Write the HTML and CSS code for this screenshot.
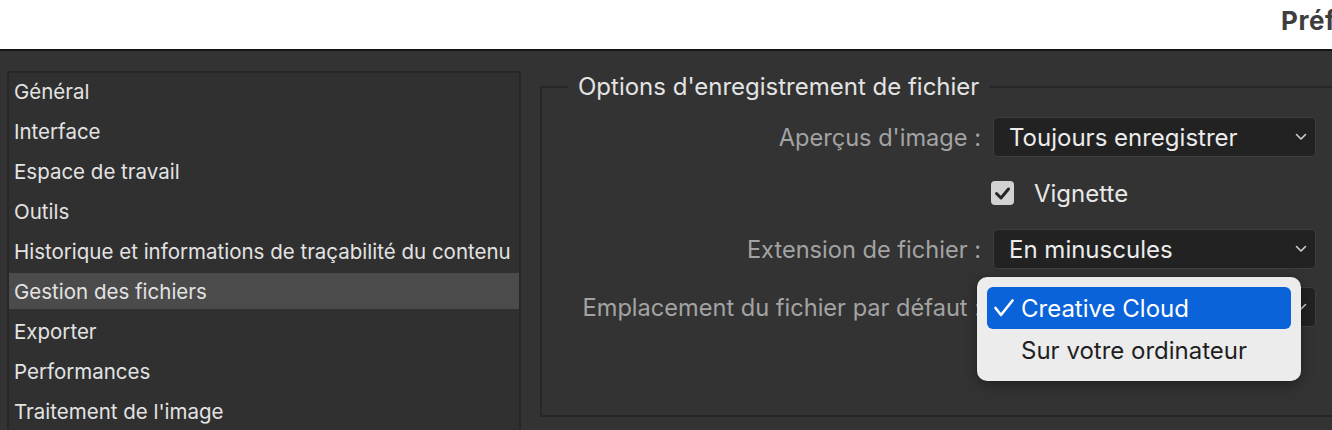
FILE: index.html
```html
<!DOCTYPE html>
<html lang="fr">
<head>
<meta charset="utf-8">
<title>Préférences</title>
<link rel="stylesheet" href="styles.css">
</head>
<body>
<div class="window">
  <header class="titlebar"><span class="title">Préférences</span></header>
  <main class="content">
    <nav class="sidebar">
      <div class="item">Général</div>
      <div class="item">Interface</div>
      <div class="item">Espace de travail</div>
      <div class="item">Outils</div>
      <div class="item">Historique et informations de traçabilité du contenu</div>
      <div class="item selected">Gestion des fichiers</div>
      <div class="item">Exporter</div>
      <div class="item">Performances</div>
      <div class="item">Traitement de l'image</div>
    </nav>
    <fieldset class="group">
      <legend class="legend">Options d'enregistrement de fichier</legend>
      <div class="form">
        <label class="lbl">Aperçus d'image :</label>
        <div class="select">
          <span>Toujours enregistrer</span>
          <svg class="chev" width="12" height="8" viewBox="0 0 12 8"><polyline points="1.5,1.5 6,6 10.5,1.5" fill="none" stroke="#cfcfcf" stroke-width="1.6" stroke-linecap="round" stroke-linejoin="round"/></svg>
        </div>

        <span class="lbl"></span>
        <div class="checkrow">
          <span class="checkbox">
            <svg width="23" height="24" viewBox="0 0 23 24"><polyline points="5.5,12.5 10,17 17.5,8" fill="none" stroke="#262626" stroke-width="3" stroke-linecap="round" stroke-linejoin="round"/></svg>
          </span>
          <span class="checklabel">Vignette</span>
        </div>

        <label class="lbl">Extension de fichier :</label>
        <div class="select">
          <span>En minuscules</span>
          <svg class="chev" width="12" height="8" viewBox="0 0 12 8"><polyline points="1.5,1.5 6,6 10.5,1.5" fill="none" stroke="#cfcfcf" stroke-width="1.6" stroke-linecap="round" stroke-linejoin="round"/></svg>
        </div>

        <label class="lbl last">Emplacement du fichier par défaut :</label>
        <div class="select open last">
          <span>Creative Cloud</span>
          <svg class="chev" width="12" height="8" viewBox="0 0 12 8"><polyline points="1.5,1.5 6,6 10.5,1.5" fill="none" stroke="#cfcfcf" stroke-width="1.6" stroke-linecap="round" stroke-linejoin="round"/></svg>
          <div class="menu">
            <div class="menu-item active">
              <svg class="tick" width="20" height="18" viewBox="0 0 20 18"><polyline points="1.5,9 7,16 18.5,1.5" fill="none" stroke="#ffffff" stroke-width="2.6" stroke-linecap="round" stroke-linejoin="round"/></svg>
              <span>Creative Cloud</span>
            </div>
            <div class="menu-item"><span>Sur votre ordinateur</span></div>
          </div>
        </div>
      </div>
    </fieldset>
  </main>
</div>
</body>
</html>
```

FILE: styles.css
```css
html, body {
  margin: 0;
  padding: 0;
  height: 430px;
  overflow: hidden;
  background: #333333;
  font-family: Inter, "Noto Sans", "Liberation Sans", sans-serif;
}

.window {
  width: 1332px;
  height: 430px;
  overflow: hidden;
}

.titlebar {
  box-sizing: border-box;
  width: 1332px;
  height: 51px;
  background: #ffffff;
  border-bottom: 2px solid #151515;
  display: flex;
  align-items: flex-start;
  padding: 5px 0 0 1281px;
  overflow: hidden;
  white-space: nowrap;
}

.title {
  font-weight: 700;
  font-size: 26px;
  line-height: 32px;
  letter-spacing: 0.6px;
  color: #3e3e3e;
}

.content {
  display: flex;
  align-items: flex-start;
  padding: 20px 0 0 7px;
}

.sidebar {
  box-sizing: border-box;
  flex-shrink: 0;
  width: 514px;
  height: 420px;
  border: 2px solid #272727;
  background: #303030;
  display: flex;
  flex-direction: column;
  gap: 4px;
}

.item {
  height: 36px;
  display: flex;
  align-items: center;
  padding-left: 5px;
  font-size: 20.5px;
  color: #e3e3e3;
  white-space: nowrap;
}

.item.selected {
  background: #4b4b4b;
}

.group {
  flex-shrink: 0;
  margin: 2px 0 0 19px;
  padding: 0 24px 88px 0;
  border: 2px solid #272727;
  min-width: 0;
}

.legend {
  margin-left: 26px;
  padding: 0 10px;
  font-size: 24px;
  line-height: 28px;
  color: #e3e3e3;
}

.form {
  display: grid;
  grid-template-columns: 439px 323px;
  column-gap: 12px;
  row-gap: 16px;
  align-items: center;
  padding-top: 16px;
}

.lbl {
  text-align: right;
  font-size: 23.6px;
  color: #a3a3a3;
  white-space: nowrap;
}

.last {
  margin-top: 2px;
}

.select {
  box-sizing: border-box;
  height: 40px;
  border: 1px solid #3e3e3e;
  border-radius: 5px;
  background: #222222;
  display: flex;
  align-items: center;
  justify-content: space-between;
  padding: 0 8px 0 15px;
  font-size: 24px;
  color: #ececec;
  white-space: nowrap;
}

.select.open {
  position: relative;
}

.checkrow {
  height: 40px;
  display: flex;
  align-items: center;
  gap: 20px;
  margin-left: -2px;
}

.checkbox {
  width: 23px;
  height: 24px;
  border-radius: 4px;
  background: #d2d2d2;
  display: block;
}

.checkbox svg {
  display: block;
}

.checklabel {
  font-size: 24px;
  color: #e8e8e8;
}

.menu {
  position: absolute;
  left: -17px;
  top: -11px;
  width: 324px;
  box-sizing: border-box;
  padding: 10px;
  background: #ececec;
  border-radius: 10px;
  box-shadow: 0 4px 14px rgba(0, 0, 0, 0.35), 0 0 0 0.5px rgba(0, 0, 0, 0.2);
}

.menu-item {
  height: 42px;
  display: flex;
  align-items: center;
  padding-left: 34px;
  border-radius: 6px;
  font-size: 24px;
  color: #1f1f1f;
  white-space: nowrap;
}

.menu-item.active {
  background: #0a63d9;
  color: #ffffff;
  padding-left: 7px;
  gap: 7px;
}

.tick {
  display: block;
}
```
